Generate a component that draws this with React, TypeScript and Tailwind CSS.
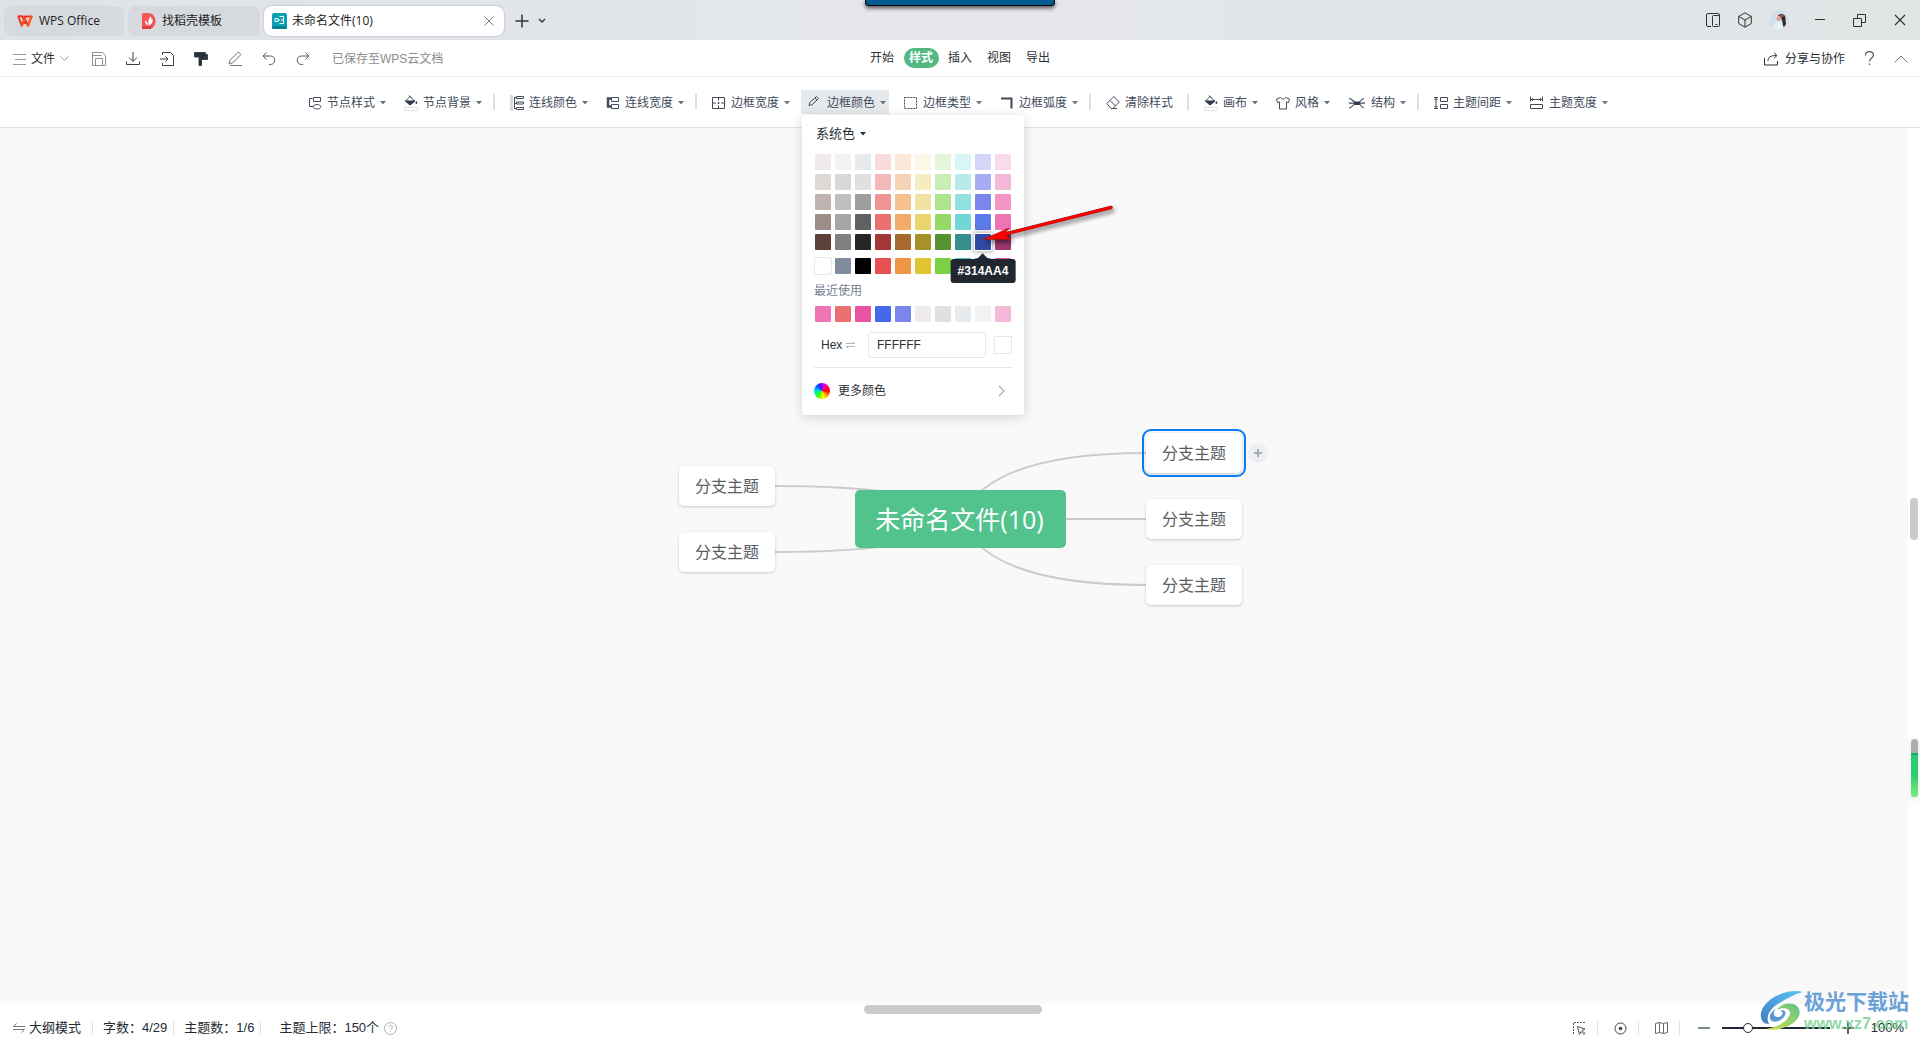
import { useState } from "react";
import type { ReactNode } from "react";
import clsx from "clsx";

const SANS = "font-['Liberation_Sans','Noto_Sans_CJK_SC',sans-serif]";
const UI = "font-['Open_Sans','Noto_Sans_CJK_SC',sans-serif]";

type IconProps = {
  w?: number;
  h?: number;
  className?: string;
  children: ReactNode;
};

function Icon({ w = 14, h = 14, className, children }: IconProps) {
  return (
    <svg
      width={w}
      height={h}
      viewBox={`0 0 ${w} ${h}`}
      fill="none"
      stroke="currentColor"
      className={clsx("shrink-0", className)}
      aria-hidden="true"
    >
      {children}
    </svg>
  );
}

function Caret({ className }: { className?: string }) {
  return (
    <Icon w={6} h={4} className={className}>
      <path d="M0 0h6L3 3.5z" fill="currentColor" stroke="none" />
    </Icon>
  );
}

/* ---------- title bar ---------- */

function WpsLogo() {
  return (
    <Icon w={16} h={12}>
      <path d="M1 1.2h4.5L8 9M1.2 1l3.6 9.8L8.2 1.4h6.4L11 10.8 7.6 3" stroke="#f5321e" strokeWidth="2" strokeLinejoin="round" />
      <path d="M4.8 10.8L8 3.4M11 10.8l3.6-9.4" stroke="#ff5a1f" strokeWidth="2" />
    </Icon>
  );
}

function DocerLogo() {
  return (
    <Icon w={14} h={16}>
      <path d="M1.500 0H6c4.500 0 7.500 3.500 7.500 8S10.500 16 6 16H0V1.500A1.500 1.500 0 0 1 1.500 0z" fill="#f25555" stroke="none" />
      <path d="M0 13.500h11.500C10 15.200 8.500 16 6 16H0z" fill="#dc3e43" stroke="none" />
      <path d="M6 12.500C3.500 11.500 3 9.500 3.200 7.500c1.800.6 2.800 2.200 2.800 5zM7 12.500C5.800 8.500 6.500 5.500 8.500 3.500c1 1.200 1.200 2.200 1 3.200l1.200-.4c.3 3-1 5.200-3.700 6.200z" fill="#fff" stroke="none" />
    </Icon>
  );
}

function MindLogo() {
  return (
    <Icon w={15} h={16}>
      <rect width="15" height="16" rx="2" fill="#0aa0b4" stroke="none" />
      <path d="M0 13h15v1.500a1.500 1.500 0 0 1-1.500 1.500h-12A1.500 1.500 0 0 1 0 14.500z" fill="#087f94" stroke="none" />
      <path d="M3 5.500h3v3H3zM6 7h2M7.500 3.500h4v7h-4M9 7h2.500" stroke="#fff" />
    </Icon>
  );
}

function Avatar() {
  return (
    <svg width="20" height="20" viewBox="0 0 20 20" aria-hidden="true">
      <circle cx="10" cy="10" r="10" fill="#cfe0ea" />
      <path d="M4 18c0-4 2-6 6-7l3 1 1 6c-3 2.500-7 2-10 0z" fill="#e4f2f5" />
      <path d="M9 5.500c2-2 5-2 7 .5.800 3 .5 6 1 8l-2 3c-2-2-1-5-2-7z" fill="#33262e" />
      <path d="M7.500 8c1-2 4-3 5-1 .5 2-1 4-3 4-1.500 0-2.500-1.500-2-3z" fill="#d9a79b" />
      <path d="M10 5l4-1 1 2-3 2z" fill="#a4524d" />
    </svg>
  );
}

function TitleBar() {
  return (
    <header
      className={clsx(
        "relative flex h-10 shrink-0 items-center bg-linear-to-r from-[#dfe3e8] via-[#e4e6ea] to-[#e1e5e6] text-xs text-[#222]",
        UI,
      )}
    >
      <div className="flex items-center gap-1 pt-[2px] pl-1">
        <button type="button" className="flex h-[30px] w-[120px] items-center gap-[6px] rounded-lg bg-[#d6d9de] pl-[13px]">
          <WpsLogo />
          WPS Office
        </button>
        <button type="button" className="flex h-[30px] w-[132px] items-center gap-[6px] rounded-lg bg-[#d6d9de] pl-[14px]">
          <DocerLogo />
          找稻壳模板
        </button>
        <div className="flex h-[30px] w-[240px] items-center rounded-lg bg-white pr-[10px] pl-2 shadow-[0_0_2px_rgba(0,0,0,0.3)]">
          <button type="button" className="flex flex-1 items-center gap-[5px]">
            <MindLogo />
            未命名文件(10)
          </button>
          <button type="button" aria-label="关闭标签">
            <Icon w={10} h={10} className="text-[#777]">
              <path d="M.5.5l9 9M9.500.5l-9 9" />
            </Icon>
          </button>
        </div>
        <button type="button" aria-label="新建" className="ml-[7px]">
          <Icon w={14} h={14} className="text-[#333]">
            <path d="M7 .5v13M.5 7h13" strokeWidth="1.500" />
          </Icon>
        </button>
        <button type="button" aria-label="标签列表" className="ml-[5px]">
          <Icon w={8} h={6} className="text-[#333]">
            <path d="M1 1l3 3 3-3" strokeWidth="1.400" />
          </Icon>
        </button>
      </div>

      <div className="absolute top-0 left-[865px] h-[6px] w-[190px] rounded-b-[4px] border-x border-b border-black bg-[#005b8f] shadow-[0_2px_4px_rgba(0,0,0,0.7)]" />

      <div className="ml-auto flex items-center pr-[14px] text-[#333]">
        <button type="button" aria-label="侧边栏">
          <Icon w={14} h={14}>
            <path d="M5 .5H2A1.500 1.500 0 0 0 .5 2v10A1.500 1.500 0 0 0 2 13.500h3" />
            <rect x="6.500" y="2.500" width="7" height="11" rx="1" />
            <path d="M4.500.5H12A1.500 1.500 0 0 1 13.500 2v2M9.500 11.500h2" />
          </Icon>
        </button>
        <button type="button" aria-label="应用" className="ml-[18px]">
          <Icon w={14} h={16}>
            <path d="M7 .8l6.300 3.600v7.200L7 15.200.7 11.600V4.400zM.7 4.400L7 8l6.300-3.600M7 8v7.200" />
          </Icon>
        </button>
        <button type="button" aria-label="账号" className="ml-[17px]">
          <Avatar />
        </button>
        <button type="button" aria-label="最小化" className="ml-[26px]">
          <Icon w={10} h={10}>
            <path d="M0 4.500h10" />
          </Icon>
        </button>
        <button type="button" aria-label="还原" className="ml-7">
          <Icon w={13} h={13}>
            <path d="M.5 4.500h8v8h-8zM4.500 4.500v-4h8v8h-4" />
          </Icon>
        </button>
        <button type="button" aria-label="关闭" className="ml-7">
          <Icon w={12} h={12}>
            <path d="M1 1l10 10M11 1L1 11" strokeWidth="1.200" />
          </Icon>
        </button>
      </div>
    </header>
  );
}

/* ---------- menu bar ---------- */

const QUICK_ACTIONS: { label: string; icon: ReactNode }[] = [
  {
    label: "保存",
    icon: <path d="M1.500 1.500h10l3 3v10h-13zM4.500 14.500v-7h7v7M1.500 4.500h9" stroke="#8a9096" />,
  },
  { label: "下载", icon: <path d="M8 1v9M4 6.500L8 10.500l4-4M1.500 10.500v3h13v-3" /> },
  { label: "导出", icon: <path d="M3.500 4V1.500h8l3 3v10h-11V12M1 8h8M6.500 5.500L9 8l-2.500 2.500" /> },
  {
    label: "格式刷",
    icon: <path d="M1.500 1.500h11v2h2v5h-6v6h-2.500V6.500h6.500V5h-1v1h-10z" fill="#27303a" stroke="#27303a" strokeWidth=".8" />,
  },
  { label: "画笔", icon: <path d="M2 13l1-4 8.500-8 2.500 2.500L5.500 12zM3 14.500h12" stroke="#70767c" /> },
  { label: "撤销", icon: <path d="M5.500 1.500L2 5l3.500 3.500M2 5h7.500a4 4 0 0 1 0 8.500H8" stroke="#555b61" /> },
  { label: "重做", icon: <path d="M10.500 1.500L14 5l-3.500 3.500M14 5H6.500a4 4 0 0 0 0 8.500H8" stroke="#555b61" /> },
];

const MENU_TABS = ["开始", "样式", "插入", "视图", "导出"];

function MenuBar() {
  const [active, setActive] = useState("样式");
  return (
    <nav
      className={clsx(
        "grid h-[37px] shrink-0 grid-cols-[1fr_auto_1fr] items-center border-b border-[#efefef] bg-white text-xs text-[#2b3035]",
        SANS,
      )}
    >
      <div className="flex items-center pt-px pl-[13px]">
        <button type="button" className="flex items-center gap-[5px]">
          <Icon w={13} h={12} className="text-[#999]">
            <path d="M0 1.500h13M2 6.500h11M0 11.500h13" />
          </Icon>
          文件
          <Icon w={9} h={6} className="text-[#999]">
            <path d="M.5.5l4 4 4-4" />
          </Icon>
        </button>
        <div className="ml-[22px] flex items-center gap-[18px]">
          {QUICK_ACTIONS.map((a) => (
            <button key={a.label} type="button" aria-label={a.label} className="text-[#3a4047]">
              <Icon w={16} h={16}>{a.icon}</Icon>
            </button>
          ))}
        </div>
        <span className="ml-[21px] text-[#8c8c8c]">已保存至WPS云文档</span>
      </div>

      <div className="flex items-center gap-1">
        {MENU_TABS.map((tab) => (
          <button
            key={tab}
            type="button"
            onClick={() => setActive(tab)}
            className={clsx(
              "flex h-5 w-[35px] items-center justify-center rounded-full",
              tab === active && "bg-[#52b983] font-bold text-white",
            )}
          >
            {tab}
          </button>
        ))}
      </div>

      <div className="flex items-center justify-end pt-px pr-3">
        <button type="button" className="flex items-center gap-[6px]">
          <Icon w={15} h={14}>
            <path d="M.5 6v7h13V9M4 9c0-4 2.500-5.500 8.500-5.500M10 .8l3 2.700-3 2.700" />
          </Icon>
          分享与协作
        </button>
        <button type="button" aria-label="帮助" className="ml-[19px]">
          <Icon w={11} h={15}>
            <path d="M1.500 4.500c0-5 8-5 8-.5 0 3-4 3-4 6.500M5.500 12.500V14" stroke="#555" strokeWidth="1.200" />
          </Icon>
        </button>
        <button type="button" aria-label="收起" className="ml-[19px]">
          <Icon w={14} h={8}>
            <path d="M.5 7.500L7 1l6.500 6.500" stroke="#777" />
          </Icon>
        </button>
      </div>
    </nav>
  );
}

/* ---------- style toolbar ---------- */

const bucket = (
  <>
    <path d="M1.500 6L6 1.500 10.500 6 6 10z" stroke="#3d4757" />
    <path d="M1.500 6h9.500L6 10z" fill="#2f3b4c" stroke="#2f3b4c" />
    <path d="M5 .5L7 2.500" stroke="#3d4757" />
    <path d="M12.500 6c1 1.500 1.200 3-.2 3s-1-1.500.2-3z" fill="#3d4757" stroke="none" />
    <path d="M.5 12.500h13v3H.5z" fill="#fff" stroke="#dfe2e6" />
  </>
);

type Tool = { label: string; icon: ReactNode; iconW?: number; caret?: boolean };

const TOOL_GROUPS: Tool[][] = [
  [
    {
      label: "节点样式",
      icon: <path d="M4.500 3.500h-3v8h4M5.500 2.500h7v4h-7zM9 9.500c5 0 5 4.500 0 4.500s-5-4.500 0-4.500z" />,
    },
    { label: "节点背景", icon: bucket },
  ],
  [
    {
      label: "连线颜色",
      icon: (
        <>
          <path d="M0 0h3v16H0z" fill="#dadada" stroke="none" />
          <path d="M4 2.500h2M4 8.500h2M4 13.500h2M4.500 2.500v11M6.500 1.500h7v2h-7zM6.500 7h7v2h-7zM6.500 12.500h7v2h-7z" />
        </>
      ),
    },
    {
      label: "连线宽度",
      icon: (
        <>
          <path d="M5 3.500H2v8h3" strokeWidth="2.500" />
          <path d="M5.500 2.500h7v4h-7zM5.500 9.500h7v4h-7z" />
        </>
      ),
    },
  ],
  [
    {
      label: "边框宽度",
      icon: <path d="M.5 2.500h12v11H.5zM6.500 2.500v3M6.500 7v2M6.500 10.500v3M1 8h3M5.500 8h2M9 8h3.500" />,
    },
    {
      label: "边框颜色",
      icon: (
        <>
          <path d="M1 10.500l.8-3L8.500 1.500l2 2L4 9.800zM7 3l2 2" />
          <path d="M.5 13.500h12v2H.5z" fill="#e9ecee" stroke="#dfe3e6" />
        </>
      ),
    },
    { label: "边框类型", icon: <path d="M.5 2.500h12v11H.5z" strokeDasharray="2 1" /> },
    { label: "边框弧度", icon: <path d="M1 3.500h10.500v10" strokeWidth="2" /> },
  ],
  [
    {
      label: "清除样式",
      caret: false,
      icon: <path d="M.8 8.500l7-7 5.500 5.500-6.500 6.500H5zM4 5.500l5.500 5.500M7 13.500h4" />,
    },
  ],
  [
    { label: "画布", icon: bucket },
    {
      label: "风格",
      icon: <path d="M4.500 2.500L.5 4l1 3.500 2-.5v7h7V7l2 .5 1-3.500-4-1.500c-1 2-4 2-5 0z" />,
    },
    {
      label: "结构",
      iconW: 18,
      icon: (
        <>
          <path d="M1 3.500c4 0 4 4.500 8 4.500s4-4.500 7-4.500M1 13c4 0 4-5 8-5s4 5 7 5M1 8.200h16" strokeWidth="1.200" />
          <path d="M6.500 6.500h5v3.500h-5z" fill="#2f3b4c" stroke="none" />
        </>
      ),
    },
  ],
  [
    {
      label: "主题间距",
      icon: <path d="M0 2.500h4M0 13.500h4M2 3v10M.5 5L2 3.500 3.500 5M.5 11L2 12.500 3.500 11M6.500 2.500h7v4h-7zM6.500 9.500h7v4h-7z" />,
    },
    {
      label: "主题宽度",
      icon: <path d="M.5 1.500v5M12.500 1.500v5M1 4.500h11M3 3L1.500 4.500 3 6M10 3l1.500 1.500L10 6M.5 9.500h12v4H.5z" />,
    },
  ],
];

function ToolButton({ tool }: { tool: Tool }) {
  const open = tool.label === "边框颜色";
  const hasCaret = tool.caret !== false;
  return (
    <button
      type="button"
      aria-expanded={hasCaret ? open : undefined}
      className={clsx(
        "flex h-6 items-center gap-[5px] pt-px pl-[7px] whitespace-nowrap",
        hasCaret ? "pr-[3px]" : "pr-[6px]",
        open && "bg-[#e7eaed]",
      )}
    >
      <Icon w={tool.iconW ?? 14} h={16}>{tool.icon}</Icon>
      {tool.label}
      {hasCaret && <Caret className="text-[#6b7280]" />}
    </button>
  );
}

function StyleToolbar() {
  return (
    <div
      role="toolbar"
      className={clsx(
        "flex h-[51px] shrink-0 items-center justify-center gap-2 border-b border-[#e3e3e3] bg-white pr-2 text-xs text-[#414b5a]",
        SANS,
      )}
    >
      {TOOL_GROUPS.map((group, i) => (
        <div key={group[0].label} className="flex items-center gap-2">
          {i > 0 && <span className="h-4 w-[2px] bg-[#dcdfe3]" />}
          {group.map((tool) =>
            tool.label === "边框颜色" ? (
              <div key={tool.label} className="relative">
                <ToolButton tool={tool} />
                <ColorPanel />
              </div>
            ) : (
              <ToolButton key={tool.label} tool={tool} />
            ),
          )}
        </div>
      ))}
    </div>
  );
}

/* ---------- colour panel ---------- */

const SYSTEM_COLORS = [
  ["#f0ebeb", "#f2f2f2", "#e7ebee", "#fadbdb", "#fbe8da", "#fcf8e8", "#e4f5db", "#daf5f5", "#d3d6f8", "#fadbeb"],
  ["#ded8d6", "#d8d8d8", "#e0e0e0", "#f5b8b8", "#f7d4b5", "#f5ecc0", "#caedb5", "#b7eaea", "#a6adf2", "#f5b8d9"],
  ["#bfb3af", "#bfbfbf", "#9e9e9e", "#f09595", "#f5c18f", "#f0e2a0", "#aee38f", "#93e0e0", "#7b86ec", "#f296c6"],
  ["#9e8c88", "#a6a6a6", "#616161", "#ec7070", "#f2ab68", "#e9d56e", "#94da69", "#70d6d6", "#5c7aea", "#ee74b4"],
  ["#5d4037", "#808080", "#262626", "#a33636", "#a66a2e", "#a6922b", "#56932f", "#368f8f", "#314aa4", "#9c376e"],
];

const BASE_COLORS = ["#ffffff", "#808c9b", "#000000", "#e94f4f", "#ee9643", "#e0c431", "#7bd144", "#45c9c9", "#4569ea", "#ea52a2"];
const RECENT_COLORS = ["#ee74b4", "#ec7070", "#ea52a2", "#4569ea", "#7b86ec", "#f0ebeb", "#e0e0e0", "#e7ebee", "#f2f2f2", "#f5b8d9"];

function Swatches({ colors }: { colors: string[] }) {
  return (
    <div className="flex gap-1 pl-px">
      {colors.map((c) => (
        <button
          key={c}
          type="button"
          aria-label={c}
          className={clsx(
            "relative size-4 rounded-[1px]",
            c === "#ffffff" && "outline outline-[#e4e7ec]",
            c === "#314aa4" && "shadow-[0_0_0_1px_#fff,0_0_4px_2px_rgba(0,0,0,0.3)]",
          )}
          style={{ backgroundColor: c }}
        >
          {c === "#314aa4" && (
            <span
              role="tooltip"
              className="absolute top-[25px] left-1/2 z-10 flex h-6 -translate-x-1/2 items-center rounded-[3px] bg-[#20272e] px-[7px] text-xs font-bold text-white"
            >
              <span className="absolute -top-1 left-1/2 size-2 -translate-x-1/2 rotate-45 bg-[#20272e]" />
              <span className="relative">#314AA4</span>
            </span>
          )}
        </button>
      ))}
    </div>
  );
}

function ColorPanel() {
  const [hex, setHex] = useState("FFFFFF");
  return (
    <section className="absolute top-[25px] left-px z-20 w-[222px] rounded-[3px] bg-white px-3 pt-[9px] pb-[14px] text-xs text-[#2b3035] shadow-[0_2px_12px_rgba(0,0,0,0.16)]">
      <button type="button" className="flex h-5 items-center gap-[5px] pl-[2px] text-[13px]">
        系统色
        <Caret />
      </button>
      <div className="mt-[10px] flex flex-col gap-1">
        {SYSTEM_COLORS.map((row) => (
          <Swatches key={row[0]} colors={row} />
        ))}
      </div>
      <div className="mt-2">
        <Swatches colors={BASE_COLORS} />
      </div>
      <h3 className="mt-[9px] h-4 leading-4 text-[#75808f]">最近使用</h3>
      <div className="mt-[7px]">
        <Swatches colors={RECENT_COLORS} />
      </div>
      <div className="mt-[10px] flex items-center">
        <label htmlFor="hex" className="flex w-[54px] items-center gap-1 pl-[7px]">
          Hex
          <Icon w={9} h={8} className="text-[#b3b9c2]">
            <path d="M0 2.500h9M6.500.5l2 2M9 5.500H0M.5 5.500l2 2" />
          </Icon>
        </label>
        <input
          id="hex"
          value={hex}
          onChange={(e) => setHex(e.target.value)}
          className="h-[26px] w-[118px] rounded-[3px] border border-[#e4e7ec] px-2 text-xs"
        />
        <span className="ml-2 size-[18px] rounded-[1px] border border-[#e4e7ec]" />
      </div>
      <hr className="mt-[9px] border-[#e4e7ec]" />
      <button type="button" className="mt-[13px] flex h-5 w-full items-center pr-[7px]">
        <span className="size-4 rounded-full bg-[conic-gradient(from_45deg,#f06,#f00_45deg,#fa0_90deg,#ff0_125deg,#3f0_170deg,#0f8_210deg,#0cf_235deg,#06f_270deg,#50f_300deg,#c0f_330deg,#f06)]" />
        <span className="ml-2">更多颜色</span>
        <Icon w={7} h={12} className="ml-auto text-[#a4acba]">
          <path d="M1 1l5 5-5 5" strokeWidth="1.200" />
        </Icon>
      </button>
    </section>
  );
}

/* ---------- mind map canvas ---------- */

const BRANCHES = [
  { id: "l1", pos: "left-[679px] top-[338px]" },
  { id: "l2", pos: "left-[679px] top-[404px]" },
  { id: "r1", pos: "left-[1146px] top-[305px]", selected: true },
  { id: "r2", pos: "left-[1146px] top-[371px]" },
  { id: "r3", pos: "left-[1146px] top-[437px]" },
];

function Canvas() {
  return (
    <main className={clsx("relative flex-1 overflow-hidden bg-[#f9f9f9]", UI)}>
      <svg className="absolute inset-0 size-full" fill="none" stroke="#cbcbcb" strokeWidth="2" aria-hidden="true">
        <path d="M961 391Q936 358 775 358" />
        <path d="M961 391Q936 424 775 424" />
        <path d="M961 391Q987 325 1146 325" />
        <path d="M961 391H1146" />
        <path d="M961 391Q987 457 1146 457" />
      </svg>
      <div className="absolute top-[362px] left-[855px] flex h-[58px] w-[211px] items-center justify-center rounded-[5px] bg-[#52c38d] pt-[2px] pr-[2px] text-[25px] whitespace-nowrap text-white">
        未命名文件(10)
      </div>
      {BRANCHES.map((b) => (
        <div
          key={b.id}
          className={clsx(
            "absolute flex h-10 w-24 items-center justify-center rounded-[5px] bg-white text-base text-[#5a5e63] shadow-[0_1px_3px_rgba(0,0,0,0.2)]",
            b.pos,
            b.selected && "outline-2 outline-offset-2 outline-[#087cf0]",
          )}
        >
          分支主题
        </div>
      ))}
      <button
        type="button"
        aria-label="添加主题"
        className="absolute top-[315px] left-[1248px] flex size-5 items-center justify-center rounded-full bg-[#edeff3] text-[#a3abbd]"
      >
        <Icon w={8} h={8}>
          <path d="M4 0v8M0 4h8" strokeWidth="2" />
        </Icon>
      </button>
    </main>
  );
}

function ScrollStrip() {
  return (
    <div className="flex w-3 shrink-0 flex-col items-center bg-white pt-[370px]">
      <div className="h-[42px] w-2 rounded-full bg-[#cbcbcb]" />
      <div className="mt-[199px] h-[58px] w-[7px] overflow-hidden rounded-full bg-[#adadad] pt-[14px] shadow-[0_2px_6px_3px_rgba(0,0,0,0.06)]">
        <div className="h-full border-t-2 border-[#1caa60] bg-linear-to-b from-[#28cc72] from-50% to-[#7aee77]" />
      </div>
    </div>
  );
}

/* ---------- status bar ---------- */

function Divider({ className }: { className?: string }) {
  return <span className={clsx("h-[14px] w-px bg-[#e0e0e0]", className)} />;
}

function Watermark() {
  return (
    <div className="pointer-events-none absolute right-[11px] bottom-[6px] flex items-start">
      <svg width="44" height="42" viewBox="0 0 44 42" aria-hidden="true">
        <defs>
          <linearGradient id="swoosh" x1="0" y1="1" x2="1" y2="0">
            <stop offset="0" stopColor="#3f7fc0" />
            <stop offset="1" stopColor="#5cc6f5" />
          </linearGradient>
          <linearGradient id="leaf" x1="0" y1="1" x2="1" y2="0">
            <stop offset="0" stopColor="#d4dc4c" />
            <stop offset="1" stopColor="#5cc486" />
          </linearGradient>
        </defs>
        <path d="M43 2C28-2 4 8 1 23c-1 7 2 11 8 11-4-7 1-16 12-22C28 8 35 4 43 2z" fill="url(#swoosh)" />
        <path d="M17 20c3-6 14-9 20-4 6 6 1 15-7 19-7 4-17 6-24 4 12-2 22-8 24-15 1-5-6-8-13-4z" fill="url(#leaf)" />
        <path d="M20 18c-7 0-9 10-1 9 4-1 5-6 1-6 3-2 7 0 5 4-2 5-9 8-13 6-5-3-1-12 8-13z" fill="#5b98d3" />
      </svg>
      <div className="flex flex-col">
        <span className="text-[21px] leading-6 font-bold text-[#6ba1d8]">极光下载站</span>
        <span className="text-base leading-5 font-bold text-[#72ce8d]/80">www.xz7.com</span>
      </div>
    </div>
  );
}

function StatusBar() {
  const [zoom, setZoom] = useState(100);
  return (
    <footer
      className={clsx(
        "relative flex h-9 shrink-0 items-center bg-white pt-3 pr-4 pl-[13px] text-[13px] text-[#222b33]",
        SANS,
      )}
    >
      <div className="absolute top-px left-[864px] h-[9px] w-[178px] rounded-full bg-[#cbcbcb]" />
      <button type="button" className="flex items-center gap-1">
        <Icon w={12} h={10} className="text-[#777]">
          <path d="M3.500.5L.5 3.500H12M0 6.500h11.500l-3 3" />
        </Icon>
        大纲模式
      </button>
      <Divider className="ml-[11px]" />
      <span className="ml-[10px]">字数：4/29</span>
      <Divider className="ml-[6px]" />
      <span className="ml-[10px]">主题数：1/6</span>
      <Divider className="ml-[6px]" />
      <span className="ml-[18px]">主题上限：150个</span>
      <button type="button" aria-label="说明" className="ml-[5px]">
        <Icon w={13} h={13} className="text-[#aab0ba]">
          <circle cx="6.500" cy="6.500" r="6" />
          <path d="M4.800 5.200c0-2.400 3.600-2.400 3.600 0 0 1.400-1.800 1.300-1.800 2.800M6.600 9v1" />
        </Icon>
      </button>

      <div className="ml-auto flex items-center">
        <button type="button" aria-label="框选">
          <Icon w={13} h={13} className="text-[#555]">
            <path d="M.5 12V.5H12" strokeDasharray="2 1" />
            <path d="M4.500 4.500l7.500 2.500-3 1.500 3 3-1 1-3-3-1.500 3z" />
          </Icon>
        </button>
        <Divider className="ml-[11px]" />
        <button type="button" aria-label="定位" className="ml-4">
          <Icon w={13} h={13} className="text-[#444]">
            <circle cx="6.500" cy="6.500" r="5.500" />
            <circle cx="6.500" cy="6.500" r="1.800" fill="currentColor" stroke="none" />
          </Icon>
        </button>
        <Divider className="ml-[11px]" />
        <button type="button" aria-label="导航图" className="ml-4">
          <Icon w={13} h={12} className="text-[#666]">
            <path d="M.5 1.500l4-1 4 1 4-1v10l-4 1-4-1-4 1zM4.500.5v10M8.500 1.500v10" />
          </Icon>
        </button>
        <Divider className="ml-[11px]" />
        <button type="button" aria-label="缩小" className="ml-[18px]">
          <Icon w={12} h={12} className="text-[#7d8a8e]">
            <path d="M0 6h12" strokeWidth="2" />
          </Icon>
        </button>
        <input
          type="range"
          min={40}
          max={320}
          value={zoom}
          onChange={(e) => setZoom(Number(e.target.value))}
          aria-label="缩放"
          className="ml-3 h-[10px] w-[108px] appearance-none bg-[linear-gradient(#222b33,#222b33)] bg-[length:100%_2px] bg-center bg-no-repeat [&::-webkit-slider-thumb]:size-[10px] [&::-webkit-slider-thumb]:appearance-none [&::-webkit-slider-thumb]:rounded-full [&::-webkit-slider-thumb]:border [&::-webkit-slider-thumb]:border-[#222b33] [&::-webkit-slider-thumb]:bg-white"
        />
        <button type="button" aria-label="放大" className="ml-3">
          <Icon w={12} h={12} className="text-[#222b33]">
            <path d="M0 6h12M6 0v12" strokeWidth="1.500" />
          </Icon>
        </button>
        <span className="ml-[17px]">{zoom}%</span>
      </div>
      <Watermark />
    </footer>
  );
}

function PointerArrow() {
  return (
    <svg
      width="140"
      height="50"
      viewBox="0 0 140 50"
      className="pointer-events-none absolute top-[200px] left-[980px] z-30 drop-shadow-[2px_3px_2px_rgba(0,0,0,0.5)]"
      aria-hidden="true"
    >
      <path d="M25 34L131 7.500" stroke="#8c1a1a" strokeWidth="3.400" strokeLinecap="round" />
      <path d="M3 39.500L29 28l-4.500 6L31 39.500z" fill="#f00" stroke="#8c1a1a" strokeWidth=".6" />
      <path d="M24 34.300L131 7.500" stroke="#f00" strokeWidth="2.600" strokeLinecap="round" />
    </svg>
  );
}

export default function App() {
  return (
    <div className="relative flex h-screen flex-col overflow-hidden bg-white">
      <TitleBar />
      <MenuBar />
      <StyleToolbar />
      <div className="flex min-h-0 flex-1">
        <Canvas />
        <ScrollStrip />
      </div>
      <StatusBar />
      <PointerArrow />
    </div>
  );
}
